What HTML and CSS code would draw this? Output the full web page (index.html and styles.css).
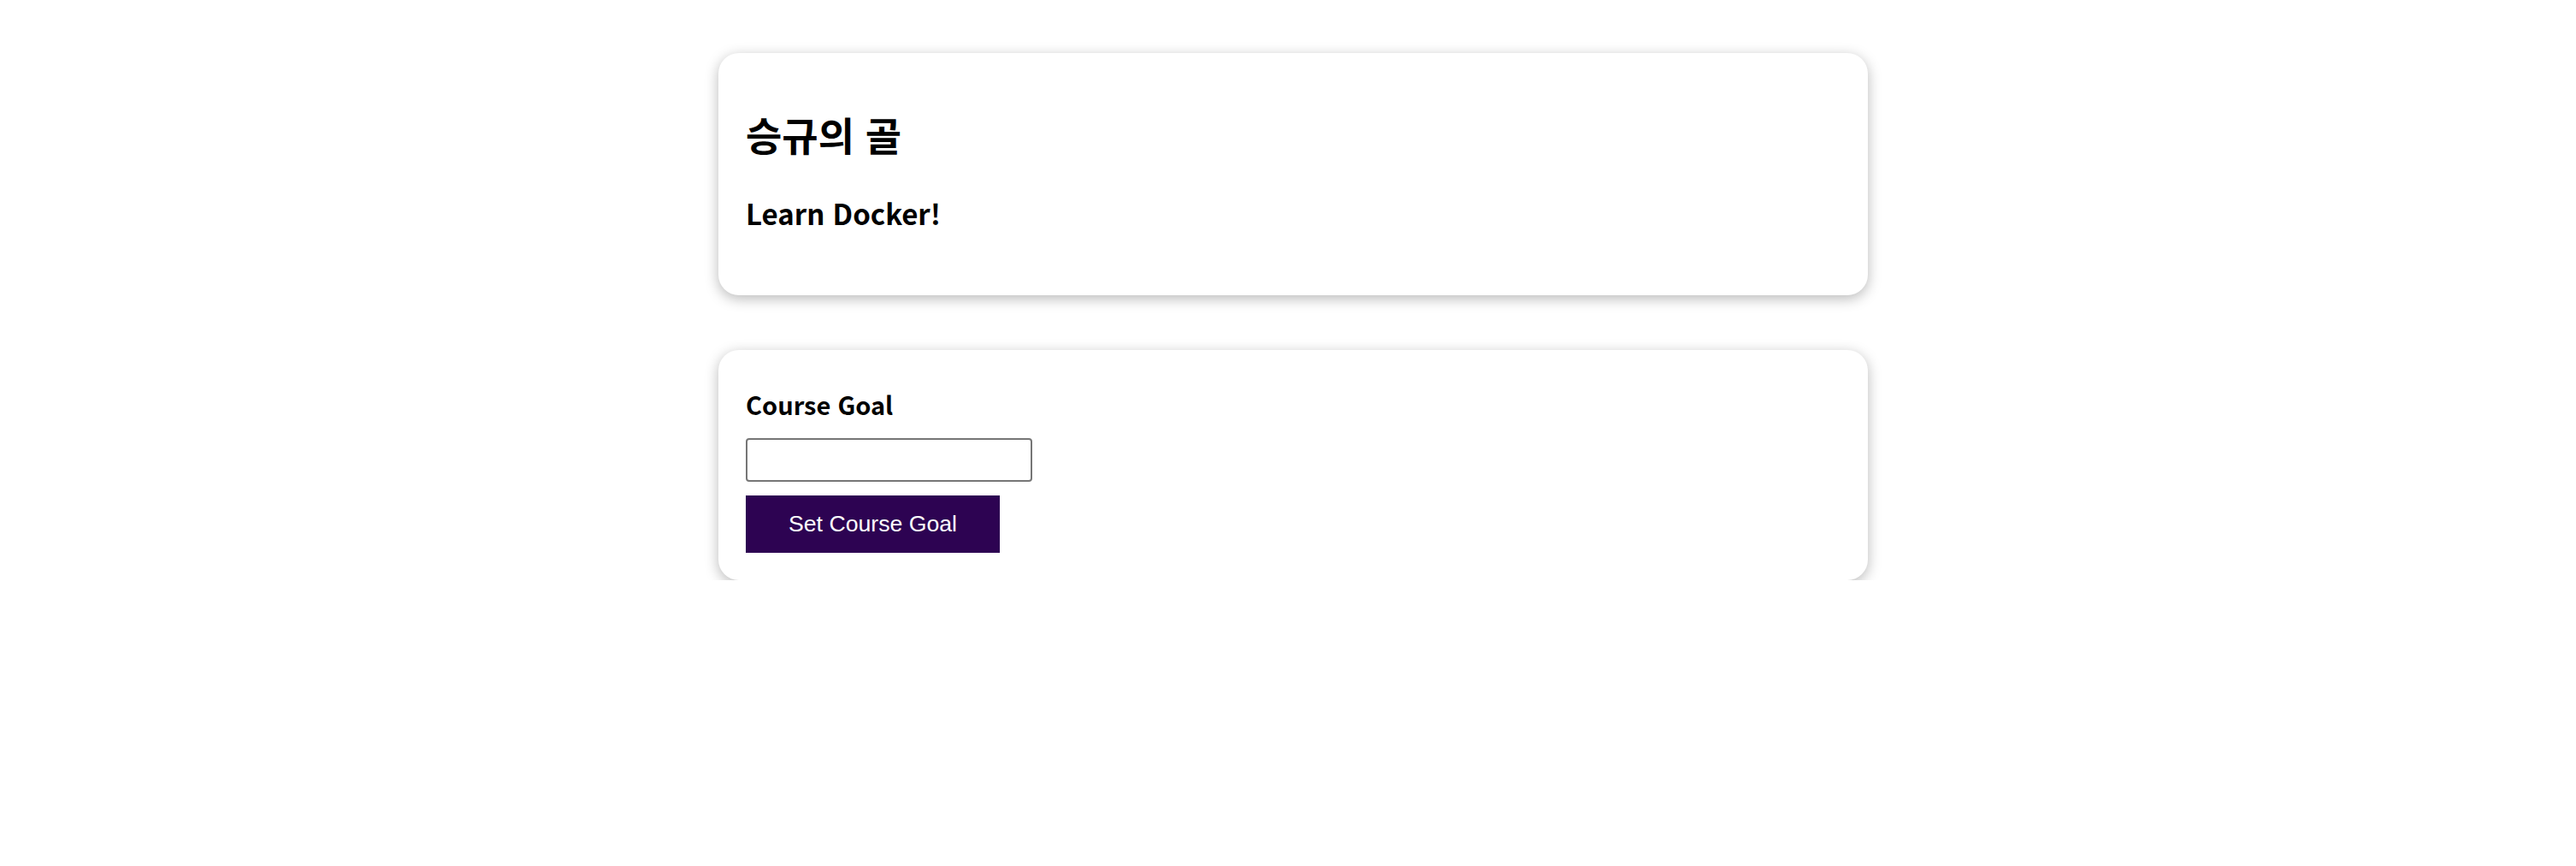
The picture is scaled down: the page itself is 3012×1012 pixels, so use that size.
FILE: index.html
```html
<!DOCTYPE html>
<html lang="ko">
<head>
<meta charset="utf-8">
<title>Course Goals</title>
<link rel="stylesheet" href="styles.css">
</head>
<body>
<main class="page">
  <section class="card goal-card">
    <h1 class="goal-title">승규의 골</h1>
    <h2 class="goal-text">Learn Docker!</h2>
  </section>
  <section class="card form-card">
    <form class="goal-form">
      <label class="goal-label" for="goal">Course Goal</label>
      <input class="goal-input" id="goal" type="text">
      <button class="goal-button" type="button">Set Course Goal</button>
    </form>
  </section>
</main>
</body>
</html>
```

FILE: styles.css
```css
* { box-sizing: border-box; }
html, body { margin: 0; padding: 0; background: #ffffff; }
body { font-family: "Noto Sans CJK KR", "Noto Sans", sans-serif; color: #000; }

.page {
  width: 1344px;
  margin-left: calc(50% - 666px);
  padding-top: 62px;
  display: flex;
  flex-direction: column;
  gap: 64px;
}

.card {
  background: #fff;
  border-radius: 24px;
  box-shadow: 0 4px 16px rgba(0, 0, 0, 0.28);
  padding: 32px;
}

.goal-title {
  margin: 34px 0 0;
  font-size: 46px;
  font-weight: 700;
  line-height: 56px;
}

.goal-text {
  margin: 45px 0 44px;
  font-size: 33px;
  font-weight: 700;
  line-height: 40px;
}

.goal-form { display: flex; flex-direction: column; align-items: flex-start; }

.goal-label {
  margin-top: 13px;
  font-size: 29px;
  font-weight: 700;
  line-height: 36px;
}

.goal-input {
  margin-top: 22px;
  width: 335px;
  height: 51px;
  border: 2px solid #767676;
  border-radius: 4px;
  font-size: 26px;
}

.goal-button {
  margin-top: 16px;
  width: 297px;
  height: 67px;
  border: none;
  background: #2d0352;
  color: #fff;
  font-family: "Liberation Sans", Arial, sans-serif;
  font-size: 26.67px;
}
```
